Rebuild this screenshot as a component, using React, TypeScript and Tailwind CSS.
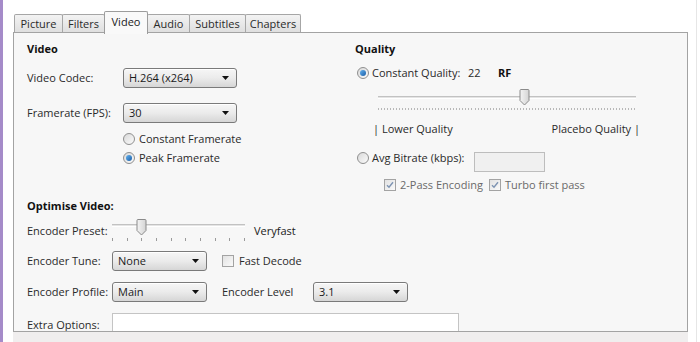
import React from 'react'

const tabs = [
  { name: 'Picture', w: 'w-[49px]' },
  { name: 'Filters', w: 'w-[43px]' },
  { name: 'Video', w: 'w-[44px]' },
  { name: 'Audio', w: 'w-[43px]' },
  { name: 'Subtitles', w: 'w-[57px]' },
  { name: 'Chapters', w: 'w-[56px]' },
]

function Select({ value, w }: { value: string; w: string }) {
  return (
    <div
      className={`${w} h-[20px] flex items-center justify-between rounded-[3px] border border-[#7a7a7a] bg-gradient-to-b from-[#f6f6f6] via-[#ebebeb] to-[#d6d6d6] pl-[5px] pr-[7px] shadow-[inset_0_1px_0_#ffffff]`}
    >
      <span className="text-[#1a1a1a]">{value}</span>
      <svg width="7" height="4" viewBox="0 0 7 4">
        <path d="M0 0h7L3.5 4z" fill="#111" />
      </svg>
    </div>
  )
}

function Radio({ on }: { on?: boolean }) {
  return (
    <div className="w-[12px] h-[12px] shrink-0 rounded-full border border-[#8f8f8f] bg-gradient-to-br from-[#d9d9d9] to-[#fbfbfb] flex items-center justify-center">
      {on && <div className="w-[6px] h-[6px] rounded-full bg-gradient-to-br from-[#63b1ee] to-[#1a5fa8]" />}
    </div>
  )
}

function Check({ on }: { on?: boolean }) {
  return (
    <div className="w-[12px] h-[12px] shrink-0 border border-[#a3a3a3] bg-gradient-to-br from-[#e2e2e2] to-[#fafafa] flex items-center justify-center">
      {on && (
        <svg width="8" height="8" viewBox="0 0 8 8">
          <path d="M1 4.2l2 2L7 1.2" stroke="#7d93b2" strokeWidth="1.4" fill="none" />
        </svg>
      )}
    </div>
  )
}

function Thumb() {
  return (
    <svg width="11" height="18" viewBox="0 0 11 18">
      <defs>
        <linearGradient id="tg" x1="0" x2="1">
          <stop offset="0" stopColor="#f4f4f4" />
          <stop offset="1" stopColor="#d4d4d4" />
        </linearGradient>
      </defs>
      <path d="M2 1.5h7a1 1 0 0 1 1 1v10l-4.5 4.5-4.5-4.5v-10a1 1 0 0 1 1-1z" fill="url(#tg)" stroke="#8a8a8a" strokeLinejoin="round" />
    </svg>
  )
}

function Track() {
  return <div className="h-[3px] border-t border-[#c2c2c2] border-b border-b-white bg-[#e4e4e4]" />
}

export default function App() {
  const qTicks = Array.from({ length: 86 })
  const pTicks = Array.from({ length: 10 })
  return (
    <div className="w-[700px] h-[342px] flex bg-white overflow-hidden font-['Open_Sans',sans-serif] text-[11px] text-[#2a2a2a]">
      <div className="w-[3px] h-full bg-[#a58bc9]" />
      <div className="flex flex-col pl-[10px]">
        {/* tabs */}
        <div className="h-[33px] flex items-end pl-[2px]">
          {tabs.map((t) =>
            t.name === 'Video' ? (
              <div
                key={t.name}
                className={`${t.w} h-[23px] -mb-px -ml-px relative z-10 flex items-center justify-center border border-b-0 border-[#9c9c9c] rounded-t-[2px] bg-[#f9f9f9] text-[#1a1a1a] pb-[2px]`}
              >
                {t.name}
              </div>
            ) : (
              <div
                key={t.name}
                className={`${t.w} h-[19px] -ml-px flex items-center justify-center border border-b-0 border-[#a6a6a6] rounded-t-[2px] bg-gradient-to-b from-[#f3f3f3] to-[#dedede] text-[#2a2a2a]`}
              >
                {t.name}
              </div>
            )
          )}
        </div>

        {/* panel */}
        <div className="w-[675px] h-[300px] -mt-px border border-[#a3a3a3] bg-[#f7f7f7] pl-[13px] overflow-hidden">
          <div className="flex">
            {/* left column */}
            <div className="w-[328px] flex flex-col">
              <div className="mt-[8px] h-[16px] flex items-center font-bold text-[#111]">Video</div>
              <div className="mt-[11px] h-[20px] flex items-center">
                <span className="w-[96px]">Video Codec:</span>
                <Select value="H.264 (x264)" w="w-[114px]" />
              </div>
              <div className="mt-[15px] h-[20px] flex items-center">
                <span className="w-[96px]">Framerate (FPS):</span>
                <Select value="30" w="w-[114px]" />
              </div>
              <div className="mt-[8px] h-[16px] flex items-center gap-[4px] pl-[96px]">
                <Radio />
                <span>Constant Framerate</span>
              </div>
              <div className="mt-[3px] h-[16px] flex items-center gap-[4px] pl-[96px]">
                <Radio on />
                <span>Peak Framerate</span>
              </div>
            </div>

            {/* right column */}
            <div className="flex-1 flex flex-col">
              <div className="mt-[8px] h-[16px] flex items-center font-bold text-[#111]">Quality</div>
              <div className="mt-[8px] h-[16px] flex items-center pl-[2px]">
                <Radio on />
                <span className="ml-[3px] w-[96px]">Constant Quality:</span>
                <span className="w-[30px]">22</span>
                <span className="font-bold text-[#111]">RF</span>
              </div>
              <div className="mt-[7px] h-[26px] ml-[23px] w-[258px] relative">
                <div className="pt-[8px]">
                  <Track />
                </div>
                <div className="mt-[9px] flex justify-between">
                  {qTicks.map((_, i) => (
                    <div key={i} className="w-px h-[2px] bg-[#b8b8b8]" />
                  ))}
                </div>
                <div className="absolute left-[141px] top-0">
                  <Thumb />
                </div>
              </div>
              <div className="mt-[7px] h-[16px] ml-[18px] w-[267px] flex items-center justify-between">
                <span>| Lower Quality</span>
                <span>Placebo Quality |</span>
              </div>
              <div className="mt-[13px] h-[22px] flex items-start pl-[2px]">
                <div className="h-[16px] flex items-center">
                  <Radio />
                  <span className="ml-[3px] w-[102px]">Avg Bitrate (kbps):</span>
                </div>
                <div className="mt-[2px] w-[71px] h-[20px] border border-[#bdbdbd] bg-[#f0f0f0]" />
              </div>
              <div className="mt-[5px] h-[16px] flex items-center pl-[29px] text-[#6a6a6a]">
                <Check on />
                <span className="ml-[4px] w-[89px]">2-Pass Encoding</span>
                <Check on />
                <span className="ml-[4px]">Turbo first pass</span>
              </div>
            </div>
          </div>

          {/* optimise */}
          <div className="mt-[5px] h-[16px] flex items-center font-bold text-[#111]">Optimise Video:</div>
          <div className="mt-[4px] h-[26px] flex items-center">
            <span className="w-[85px]">Encoder Preset:</span>
            <div className="w-[133px] h-[26px] relative">
              <div className="pt-[6px]">
                <Track />
              </div>
              <div className="mt-[11px] flex justify-between">
                {pTicks.map((_, i) => (
                  <div key={i} className="w-px h-[3px] bg-[#9a9a9a]" />
                ))}
              </div>
              <div className="absolute left-[24px] top-0">
                <Thumb />
              </div>
            </div>
            <span className="ml-[9px] text-[#1a1a1a]">Veryfast</span>
          </div>
          <div className="mt-[7px] h-[20px] flex items-center">
            <span className="w-[85px]">Encoder Tune:</span>
            <Select value="None" w="w-[95px]" />
            <div className="ml-[15px] flex items-center">
              <Check />
              <span className="ml-[5px]">Fast Decode</span>
            </div>
          </div>
          <div className="mt-[11px] h-[20px] flex items-center">
            <span className="w-[85px]">Encoder Profile:</span>
            <Select value="Main" w="w-[95px]" />
            <span className="ml-[15px] w-[91px]">Encoder Level</span>
            <Select value="3.1" w="w-[95px]" />
          </div>
          <div className="mt-[11px] h-[20px] flex items-start">
            <span className="w-[85px] pt-[4px]">Extra Options:</span>
            <div className="w-[347px] h-[22px] border border-[#c4c4c4] bg-white" />
          </div>
        </div>
        <div className="flex-1 bg-[#f0eeee]" />
      </div>
      <div className="w-[8px]" />
      <div className="w-px h-full bg-[#e6e6e6]" />
      <div className="flex-1" />
    </div>
  )
}
